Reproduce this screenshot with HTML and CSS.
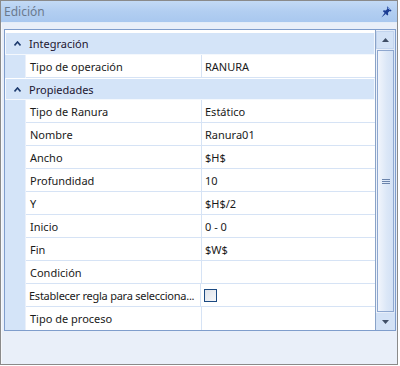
FILE: index.html
```html
<!DOCTYPE html>
<html>
<head>
<meta charset="utf-8">
<link rel="stylesheet" href="styles.css">
</head>
<body>
<div class="window">
  <div class="header">
    <span class="title">Edición</span>
    <svg class="pin" width="11" height="12" viewBox="0 0 10 11">
      <path d="M5.6 0.3 L9.7 4.4 L8.6 5 L7.9 4.6 L6.3 6.2 L6.6 8.1 L5.8 8.8 L1.7 4.7 L2.4 3.9 L4.3 4.2 L5.9 2.6 L5.4 1.8 Z" fill="#1b3d93"/>
      <path d="M3.4 6.1 L0.3 10.6 L4.5 7.2 Z" fill="#1b3d93"/>
      <path d="M6.1 1.5 L8.2 3.6" stroke="#86aef0" stroke-width="0.9"/>
    </svg>
  </div>
  <div class="grid">
    <div class="rows">
      <div class="cat"><span class="chev"><svg width="7" height="5" viewBox="0 0 7 5"><path d="M0.5 4.5 L3.5 1 L6.5 4.5" stroke="#1d3b6e" stroke-width="1.6" fill="none"/></svg></span><span class="catname">Integración</span></div>
      <div class="row"><span class="gut"></span><span class="name">Tipo de operación</span><span class="val">RANURA</span></div>
      <div class="cat"><span class="chev"><svg width="7" height="5" viewBox="0 0 7 5"><path d="M0.5 4.5 L3.5 1 L6.5 4.5" stroke="#1d3b6e" stroke-width="1.6" fill="none"/></svg></span><span class="catname">Propiedades</span></div>
      <div class="row"><span class="gut"></span><span class="name">Tipo de Ranura</span><span class="val">Estático</span></div>
      <div class="row"><span class="gut"></span><span class="name">Nombre</span><span class="val">Ranura01</span></div>
      <div class="row"><span class="gut"></span><span class="name">Ancho</span><span class="val">$H$</span></div>
      <div class="row"><span class="gut"></span><span class="name">Profundidad</span><span class="val">10</span></div>
      <div class="row"><span class="gut"></span><span class="name">Y</span><span class="val">$H$/2</span></div>
      <div class="row"><span class="gut"></span><span class="name">Inicio</span><span class="val">0 - 0</span></div>
      <div class="row"><span class="gut"></span><span class="name">Fin</span><span class="val">$W$</span></div>
      <div class="row"><span class="gut"></span><span class="name">Condición</span><span class="val"></span></div>
      <div class="row"><span class="gut"></span><span class="name long">Establecer regla para selecciona...</span><span class="val"><span class="check"></span></span></div>
      <div class="row last"><span class="gut"></span><span class="name">Tipo de proceso</span><span class="val"></span></div>
    </div>
    <div class="scroll">
      <div class="btn"><svg width="7" height="4" viewBox="0 0 7 4"><path d="M0 4 L3.5 0 L7 4 Z" fill="#3f4e66"/></svg></div>
      <div class="thumb"><span class="grip"></span><span class="grip"></span><span class="grip"></span></div>
      <div class="btn down"><svg width="7" height="4" viewBox="0 0 7 4"><path d="M0 0 L7 0 L3.5 4 Z" fill="#3f4e66"/></svg></div>
    </div>
  </div>
</div>
</body>
</html>
```

FILE: styles.css
```css
html, body {
  margin: 0;
  padding: 0;
  background: #ffffff;
}
body {
  font-family: "Noto Sans", "Open Sans", sans-serif;
  font-size: 11px;
  color: #1a1a1a;
}
.window {
  width: 396px;
  height: 363px;
  border: 1px solid #8a8a8a;
  background: #e9eff9;
  box-shadow: inset 1px 0 0 #f6f8fc;
  display: flex;
  flex-direction: column;
}
.header {
  height: 21px;
  border-bottom: 1px solid #e4edf8;
  background: linear-gradient(#c3daf5, #b2cef1 50%, #a9c8ef);
  display: flex;
  align-items: center;
  justify-content: space-between;
  padding: 0 5px 0 3px;
}
.title {
  color: #6b7a8e;
  font-size: 12px;
  line-height: 14px;
}
.pin {
  display: block;
  margin-top: 1px;
}
.grid {
  margin: 6px 0 0 3px;
  width: 390px;
  height: 300px;
  border: 1px solid #7f9dcc;
  background: #ffffff;
  display: flex;
}
.rows {
  width: 370px;
  padding-top: 2px;
  display: flex;
  flex-direction: column;
}
.cat {
  height: 21px;
  background: #d4e4f8;
  border: 1px solid #f4f8fd;
  border-top-color: #ffffff;
  display: flex;
  align-items: center;
}
.chev {
  width: 20px;
  display: flex;
  justify-content: center;
  padding-left: 1px;
}
.chev svg { display: block; }
.catname {
  padding-left: 2px;
  padding-top: 1px;
  color: #1d1630;
}
.row {
  height: 23px;
  display: flex;
}
.gut {
  width: 20px;
  flex: none;
  background: #d4e4f8;
  border-right: 1px solid #eaf0fa;
}
.name {
  width: 171px;
  flex: none;
  padding-left: 4px;
  padding-top: 1px;
  border-right: 1px solid #d6e3f5;
  border-bottom: 1px solid #d6e3f5;
  line-height: 21px;
  white-space: nowrap;
  overflow: hidden;
}
.name.long {
  padding-left: 3px;
  letter-spacing: -0.25px;
}
.val {
  flex: 1;
  padding-left: 3px;
  padding-top: 1px;
  border-bottom: 1px solid #d6e3f5;
  line-height: 21px;
  display: flex;
  align-items: center;
}
.row.last .name, .row.last .val { border-bottom: none; }
.check {
  width: 11px;
  height: 11px;
  margin-top: -1px;
  border: 1px solid #1c4a82;
  background: linear-gradient(135deg, #dfe3ea, #f6f7f9);
}
.scroll {
  width: 18px;
  border-left: 1px solid #8aa3c8;
  background: linear-gradient(90deg, #eef3fb, #dfe9f7);
  display: flex;
  flex-direction: column;
  padding: 1px 1px 0 0;
}
.btn {
  height: 16px;
  background: #d3e2f6;
  border: 1px solid #c2d4ee;
  display: flex;
  align-items: center;
  justify-content: center;
}
.btn svg { display: block; }
.btn.down {
  height: 17px;
  border: none;
  margin-right: -1px;
}
.thumb {
  flex: 1;
  margin: 1px 0 1px 1px;
  border: 1px solid #8ea7cf;
  background: linear-gradient(90deg, #f1f5fc, #dbe7f7 60%, #d3e1f5);
  display: flex;
  flex-direction: column;
  align-items: center;
  justify-content: center;
  gap: 1px;
}
.grip {
  width: 8px;
  height: 1px;
  background: #6b84ac;
}
```
